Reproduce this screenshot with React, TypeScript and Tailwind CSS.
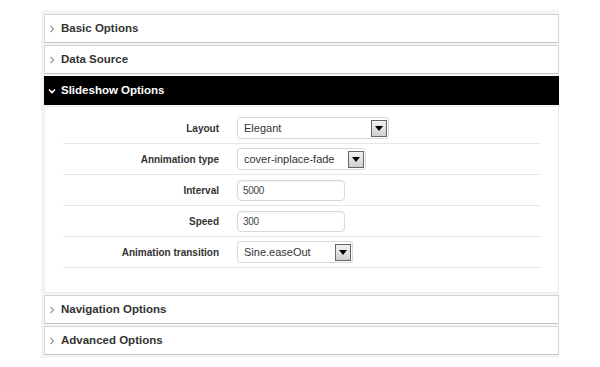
import React from 'react';

const font = { fontFamily: '"Liberation Sans", Arial, sans-serif' };

const Header = ({ label, open = false }: { label: string; open?: boolean }) => (
  <div
    className={`h-[29px] flex items-center pl-[3px] border ${
      open ? 'bg-black border-black text-white' : 'bg-white border-[#d4d4d4] border-b-[#c4c4c4] text-[#333]'
    }`}
  >
    {open ? (
      <svg width="8" height="6" viewBox="0 0 8 6" className="mr-[5px]">
        <path d="M1 1.5 L4 4.5 L7 1.5" stroke="#fff" strokeWidth="1.6" fill="none" />
      </svg>
    ) : (
      <svg width="6" height="8" viewBox="0 0 6 8" className="mr-[6px] ml-[1px]">
        <path d="M1.5 1 L4.5 4 L1.5 7" stroke="#999" strokeWidth="1.2" fill="none" />
      </svg>
    )}
    <span className="text-[11.5px] font-bold">{label}</span>
  </div>
);

const Arrow = () => (
  <span className="w-[16px] h-[17px] border border-[#666] bg-gradient-to-b from-[#f2f2f2] to-[#cfcfcf] flex items-center justify-center mr-[1px]">
    <svg width="8" height="5" viewBox="0 0 8 5">
      <path d="M0 0 H8 L4 5 Z" fill="#000" />
    </svg>
  </span>
);

const Select = ({ value, width }: { value: string; width: string }) => (
  <div className={`${width} h-[22px] border border-[#d8d8d8] rounded-[3px] bg-white flex items-center justify-between pl-[6px]`}>
    <span className="text-[11px] text-[#333]">{value}</span>
    <Arrow />
  </div>
);

const Input = ({ value }: { value: string }) => (
  <div className="w-[108px] h-[21px] border border-[#d8d8d8] rounded-[4px] bg-white flex items-center pl-[5px] shadow-[inset_0_1px_2px_rgba(0,0,0,0.06)]">
    <span className="text-[10px] text-[#444] tracking-[-0.3px]">{value}</span>
  </div>
);

const Row = ({ label, children }: { label: string; children: React.ReactNode }) => (
  <div className="h-[31px] border-b border-[#e6e6e6] flex items-center">
    <div className="w-[156px] text-right text-[10px] font-bold text-[#333]">{label}</div>
    <div className="ml-[18px] flex items-center">{children}</div>
  </div>
);

export default function App() {
  return (
    <div className="w-[600px] h-[367px] bg-white pt-[10px] pl-[41px]" style={font}>
      <div className="w-[518px] bg-[#f4f4f4] pl-[3px] pt-[4px] pb-[3px] flex flex-col gap-[2px]">
        <Header label="Basic Options" />
        <Header label="Data Source" />
        <div className="flex flex-col">
          <Header label="Slideshow Options" open />
          <div className="bg-white border border-[#ececec] mt-[1px] pt-[6px] pb-[24px] pl-[18px]">
            <div className="w-[477px]">
              <Row label="Layout">
                <Select value="Elegant" width="w-[152px]" />
              </Row>
              <Row label="Annimation type">
                <Select value="cover-inplace-fade" width="w-[129px]" />
              </Row>
              <Row label="Interval">
                <Input value="5000" />
              </Row>
              <Row label="Speed">
                <Input value="300" />
              </Row>
              <Row label="Animation transition">
                <Select value="Sine.easeOut" width="w-[116px]" />
              </Row>
            </div>
          </div>
        </div>
        <Header label="Navigation Options" />
        <Header label="Advanced Options" />
      </div>
    </div>
  );
}
